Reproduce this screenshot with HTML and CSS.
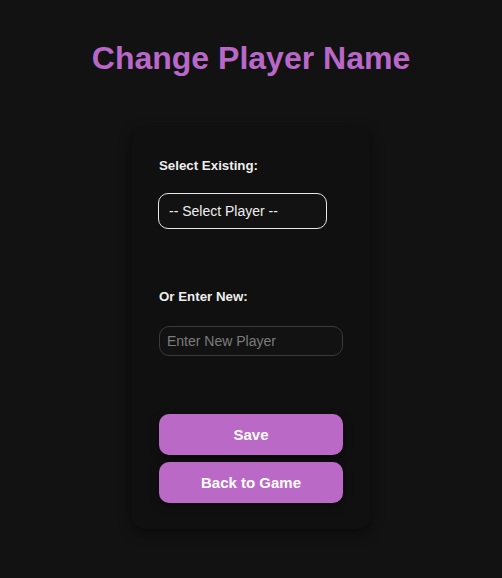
FILE: index.html
```html
<!DOCTYPE html>
<html>
<head>
<meta charset="utf-8">
<link rel="stylesheet" href="styles.css">
</head>
<body>
<main class="page">
  <h1 class="title">Change Player Name</h1>
  <section class="card">
    <label class="label">Select Existing:</label>
    <div class="select">-- Select Player --</div>
    <label class="label label-new">Or Enter New:</label>
    <input class="input" type="text" placeholder="Enter New Player">
    <div class="actions">
      <button class="btn">Save</button>
      <button class="btn">Back to Game</button>
    </div>
  </section>
</main>
</body>
</html>
```
FILE: styles.css
```css
html, body {
  margin: 0;
  padding: 0;
  background: #121212;
  height: 100%;
}
body {
  font-family: "Liberation Sans", Arial, sans-serif;
  color: #eee;
}
.page {
  display: flex;
  flex-direction: column;
  align-items: center;
  padding-top: 40px;
}
.title {
  margin: 0;
  font-size: 32px;
  line-height: 37px;
  font-weight: bold;
  color: #b967c9;
}
.card {
  margin-top: 50px;
  width: 238px;
  box-sizing: border-box;
  padding: 29px 27px 26px 27px;
  background: #101010;
  border-radius: 12px;
  box-shadow: 0 4px 14px rgba(0,0,0,0.45);
  display: flex;
  flex-direction: column;
  align-items: flex-start;
}
.label {
  font-size: 13.3px;
  line-height: 19px;
  font-weight: bold;
  color: #eee;
}
.select {
  margin-top: 18px;
  margin-left: -1px;
  width: 169px;
  height: 36px;
  box-sizing: border-box;
  border: 1px solid #e8e8e8;
  border-radius: 10px;
  padding-left: 10px;
  font-size: 14px;
  line-height: 34px;
  color: #eee;
  background: #121212;
}
.label-new {
  margin-top: 58px;
}
.input {
  margin-top: 20px;
  width: 184px;
  height: 30px;
  box-sizing: border-box;
  border: 1px solid #3a3a3a;
  border-radius: 10px;
  background: #121212;
  padding: 0 7px;
  font-family: "Liberation Sans", Arial, sans-serif;
  font-size: 14px;
  color: #eee;
  outline: none;
}
.input::placeholder {
  color: #7c7c7c;
}
.actions {
  margin-top: 58px;
  display: flex;
  flex-direction: column;
  gap: 7px;
  width: 184px;
}
.btn {
  height: 41px;
  border: none;
  border-radius: 10px;
  background: #bb69c6;
  color: #fff;
  font-family: "Liberation Sans", Arial, sans-serif;
  font-size: 15px;
  font-weight: bold;
  box-shadow: 0 3px 8px rgba(0,0,0,0.5);
  cursor: pointer;
}
```
